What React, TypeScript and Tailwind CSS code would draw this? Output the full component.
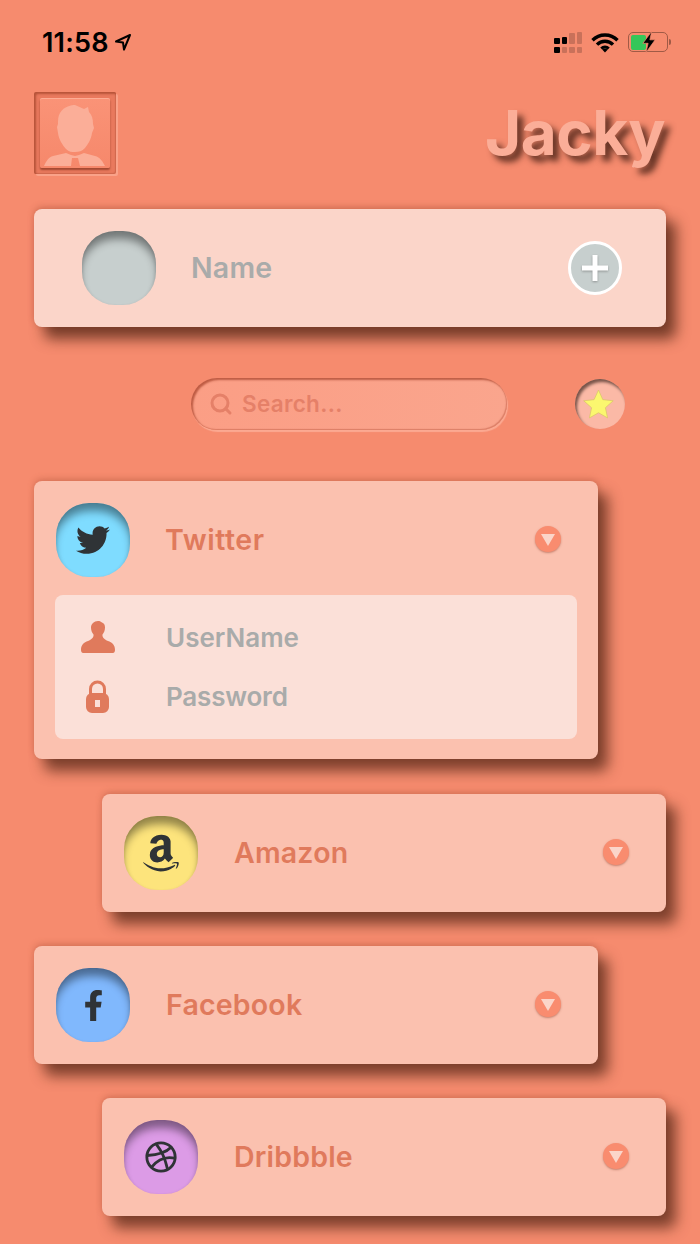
import { Dribbble, Search } from "lucide-react";
import type { ReactNode } from "react";
import { FaAmazon, FaFacebookF, FaTwitter } from "react-icons/fa";

const font = { fontFamily: "Inter, 'Liberation Sans', sans-serif" };

const StatusBar = () => (
  <div className="flex h-[84px] items-center justify-between pl-[42px] pr-[29px] text-black">
    <div className="flex items-center gap-[5px]">
      <span className="text-[27px] font-semibold leading-none tracking-[0.2px]">11:58</span>
      <svg viewBox="0 0 18 18" className="h-[18px] w-[18px]" fill="none" stroke="black" strokeWidth="2" strokeLinejoin="round">
        <path d="M16 2 2 8.500l7 1 1 7z" />
      </svg>
    </div>
    <div className="flex items-center gap-[9px]">
      <div className="flex flex-col gap-[3px]">
        <div className="flex items-end gap-[2px]">
          <span className="h-[6px] w-[5.5px] rounded-[1px] bg-black" />
          <span className="h-[7px] w-[5.5px] rounded-[1px] bg-black" />
          <span className="h-[11px] w-[5.5px] rounded-[1px] bg-[#c9715a]" />
          <span className="h-[12px] w-[5.5px] rounded-[1px] bg-[#c9715a]" />
        </div>
        <div className="flex items-end gap-[2px]">
          <span className="h-[6px] w-[5.5px] rounded-[1px] bg-black" />
          <span className="h-[6px] w-[5.5px] rounded-[1px] bg-[#c9715a]" />
          <span className="h-[6px] w-[5.5px] rounded-[1px] bg-[#c9715a]" />
          <span className="h-[6px] w-[5.5px] rounded-[1px] bg-[#c9715a]" />
        </div>
      </div>
      <svg viewBox="0 0 28 21" className="h-[21px] w-[28px]" fill="none" stroke="black" strokeWidth="3.400">
        <path d="M1.500 8.200a17.600 17.600 0 0 1 25 0" />
        <path d="M6 12.600a11.300 11.300 0 0 1 16 0" />
        <path d="M10.300 16.600a5.300 5.300 0 0 1 7.400 0" strokeWidth="3" />
        <path d="m14 20.600-2.600-2.800a3.600 3.600 0 0 1 5.200 0z" fill="black" stroke="none" />
      </svg>
      <div className="relative flex items-center">
        <div className="h-[20px] w-[40px] rounded-[5px] border-[1.5px] border-[#a05a46] p-[1.5px]">
          <div className="h-full w-[15px] rounded-[2px] bg-[#35c759]" />
        </div>
        <span className="ml-[1px] h-[6px] w-[2px] rounded-r-sm bg-[#a05a46]" />
        <svg viewBox="0 0 16 24" className="absolute left-[14px] top-[-1px] h-[22px] w-[14px]" fill="black" stroke="#f68b6e" strokeWidth="0.800">
          <path d="M11 0 1 13.500h6L4.500 24 15 9.500H9z" />
        </svg>
      </div>
    </div>
  </div>
);

const Avatar = () => (
  <div className="h-[82px] w-[82px] rounded-[2px] bg-[#e9795d] p-[6px] shadow-[inset_2px_2px_2px_rgba(150,60,35,0.6),inset_-1px_-1px_1px_rgba(170,80,55,0.4),2px_2px_0_rgba(255,190,170,0.45)]">
    <div className="h-full w-full overflow-hidden rounded-[2px] bg-gradient-to-b from-[#fa9377] to-[#f6886b] shadow-[inset_0_1px_0_rgba(255,200,180,0.5),0_2px_2px_rgba(130,50,30,0.7)]">
      <svg viewBox="0 0 70 70" className="h-full w-full">
        <path fill="#fbae98" d="M35 7c-3 0-11 1-15 8-2 3-2 7-2 11l-1 3 1 6c1 7 4 11 8 16 3 3 6 3 9 3 4 0 7-1 10-4 3-4 6-8 7-15l2-5-1-4c0-5-1-9-4-12l-1-5-4 2z" />
        <path fill="#fbae98" d="M4 68c2-5 5-9 9-10l13-3 5 2 4 1 4-1 5-2 11 3c5 1 8 6 10 10H40l-2-8h-6l-1 8z" />
      </svg>
    </div>
  </div>
);

const Squircle = ({ color, children }: { color: string; children?: ReactNode }) => (
  <div
    className={`flex h-[74px] w-[74px] shrink-0 items-center justify-center rounded-[33px] text-[#2f3336] shadow-[inset_0_10px_9px_-2px_rgba(0,0,0,0.42),inset_2px_0_3px_-1px_rgba(0,0,0,0.08),inset_-2px_0_3px_-1px_rgba(0,0,0,0.08)] ${color}`}
  >
    {children}
  </div>
);

const Chevron = () => (
  <div className="-mt-[2px] flex h-[26px] w-[26px] items-center justify-center rounded-full bg-[#f98c6f] shadow-[0_1px_2px_rgba(150,70,50,0.5)]">
    <svg viewBox="0 0 14 12" className="mt-[1px] h-[12px] w-[14px]" fill="#fbd5c9">
      <path d="M0 0h14L7 12z" />
    </svg>
  </div>
);

const Account = ({ name, color, icon, shifted }: { name: string; color: string; icon: ReactNode; shifted?: boolean }) => (
  <div
    className={`flex h-[118px] w-[564px] items-center rounded-[8px] bg-[#fbc1af] pl-[22px] pr-[37px] shadow-[10px_12px_14px_rgba(70,30,15,0.68),0_-2px_6px_rgba(170,80,55,0.4)] ${
      shifted ? "ml-[102px]" : "ml-[34px]"
    }`}
  >
    <Squircle color={color}>{icon}</Squircle>
    <span className="ml-[36px] flex-1 text-[28.5px] font-semibold tracking-[0.2px] text-[#e07a5c]">{name}</span>
    <Chevron />
  </div>
);

const App = () => {
  return (
    <div className="h-[1244px] w-[700px] overflow-hidden bg-[#f68b6e]" style={font}>
      <StatusBar />

      <div className="mt-[8px] flex h-[82px] items-center justify-between pl-[34px] pr-[35px]">
        <Avatar />
        <span className="text-[62px] font-bold leading-none tracking-[-0.5px] text-[#fbae98] [text-shadow:6px_6px_6px_rgba(60,25,15,0.78)]">
          Jacky
        </span>
      </div>

      <div className="ml-[34px] mt-[35px] flex h-[118px] w-[632px] items-center rounded-[8px] bg-[#fbd5c9] pl-[48px] pr-[44px] shadow-[10px_12px_14px_rgba(70,30,15,0.72),0_-2px_6px_rgba(170,80,55,0.45)]">
        <Squircle color="bg-[#c7cfce]" />
        <span className="ml-[35px] flex-1 text-[28.5px] font-semibold tracking-[0.2px] text-[#a9abaa]">Name</span>
        <div className="flex h-[54px] w-[54px] items-center justify-center rounded-full border-[3px] border-white bg-[#c7cfce]">
          <svg viewBox="0 0 26 26" className="mr-[1px] h-[26px] w-[26px] drop-shadow-[0_1px_1px_rgba(90,90,90,0.5)]" fill="white">
            <path d="M10.500 0h5v10.500H26v5H15.500V26h-5V15.500H0v-5h10.500z" />
          </svg>
        </div>
      </div>

      <div className="mt-[51px] flex items-center pl-[191px]">
        <div className="flex h-[52px] w-[316px] items-center gap-[9px] rounded-full bg-gradient-to-r from-[#fb9e85] to-[#faa58d] pl-[18px] shadow-[inset_2px_2px_2px_rgba(170,70,45,0.75),inset_-1px_-1px_1px_rgba(190,90,65,0.5),1px_2px_1px_rgba(255,190,170,0.6)]">
          <Search className="h-[24px] w-[24px] text-[#e58068]" strokeWidth={3} />
          <span className="text-[22.5px] font-semibold tracking-[0.3px] text-[#e58068]">Search...</span>
        </div>
        <div className="ml-[68px] flex h-[50px] w-[50px] items-center justify-center rounded-full bg-[#fbb9a6] shadow-[inset_2px_3px_3px_rgba(50,30,25,0.65)]">
          <svg viewBox="0 0 30 30" className="mr-[4px] h-[31px] w-[31px]" fill="#fbf76f" stroke="#d8c56a" strokeWidth="0.700">
            <path d="m15 1 4.200 9.300 10 1.100-7.500 6.700 2.100 9.900-8.800-5-8.800 5 2.100-9.900L.7 11.400l10-1.100z" />
          </svg>
        </div>
      </div>

      <div className="ml-[34px] mt-[51px] h-[278px] w-[564px] rounded-[8px] bg-[#fbc1af] px-[21px] pt-[22px] shadow-[10px_12px_14px_rgba(70,30,15,0.68),0_-2px_6px_rgba(170,80,55,0.4)]">
        <div className="flex items-center pl-[1px] pr-[16px]">
          <Squircle color="bg-[#7fdcff]">
            <FaTwitter className="h-[34px] w-[34px]" />
          </Squircle>
          <span className="ml-[35px] flex-1 text-[28.5px] font-semibold tracking-[0.6px] text-[#e07a5c]">Twitter</span>
          <Chevron />
        </div>
        <div className="mt-[18px] flex h-[144px] flex-col gap-[15px] rounded-[8px] bg-[#fbe0d8] pl-[26px] pt-[20px]">
          <div className="flex h-[44px] items-center">
            <svg viewBox="0 0 34 32" className="h-[32px] w-[34px]" fill="#e07a5c">
              <path d="M17 0c2 0 3 .6 4 1.500 2 .6 3 2.500 3 5 0 3-1 5-2.500 7-.5 3 2 5 5.500 6.500 4 1.600 7 3.500 7 9 0 2-1 3-2 3H2c-1 0-2-1-2-3 0-5.500 3-7.400 7-9 3.500-1.500 6-3.500 5.500-6.500C11 11.500 10 9.500 10 6.500 10 3 13 0 17 0z" />
            </svg>
            <span className="ml-[51px] text-[26px] font-semibold text-[#a9abaa]">UserName</span>
          </div>
          <div className="flex h-[44px] items-center">
            <svg viewBox="0 0 23 33" className="ml-[5px] h-[33px] w-[23px]" fill="none">
              <path d="M4.500 16V9a7 7 0 0 1 14 0v7" stroke="#e07a5c" strokeWidth="3" />
              <path fillRule="evenodd" fill="#e07a5c" d="M6 13h11a6 6 0 0 1 6 6v8a6 6 0 0 1-6 6H6a6 6 0 0 1-6-6v-8a6 6 0 0 1 6-6zm3 7v7h5v-7z" />
            </svg>
            <span className="ml-[57px] text-[26px] font-semibold tracking-[-0.2px] text-[#a9abaa]">Password</span>
          </div>
        </div>
      </div>

      <div className="mt-[35px] flex flex-col gap-[34px]">
        <Account name="Amazon" color="bg-[#fde47c]" shifted icon={<FaAmazon className="h-[42px] w-[42px]" />} />
        <Account name="Facebook" color="bg-[#80b8fd]" icon={<FaFacebookF className="h-[31px] w-[31px]" />} />
        <Account name="Dribbble" color="bg-[#dc9be6]" shifted icon={<Dribbble className="h-[34px] w-[34px]" strokeWidth={2} />} />
      </div>
    </div>
  );
};

export default App;
